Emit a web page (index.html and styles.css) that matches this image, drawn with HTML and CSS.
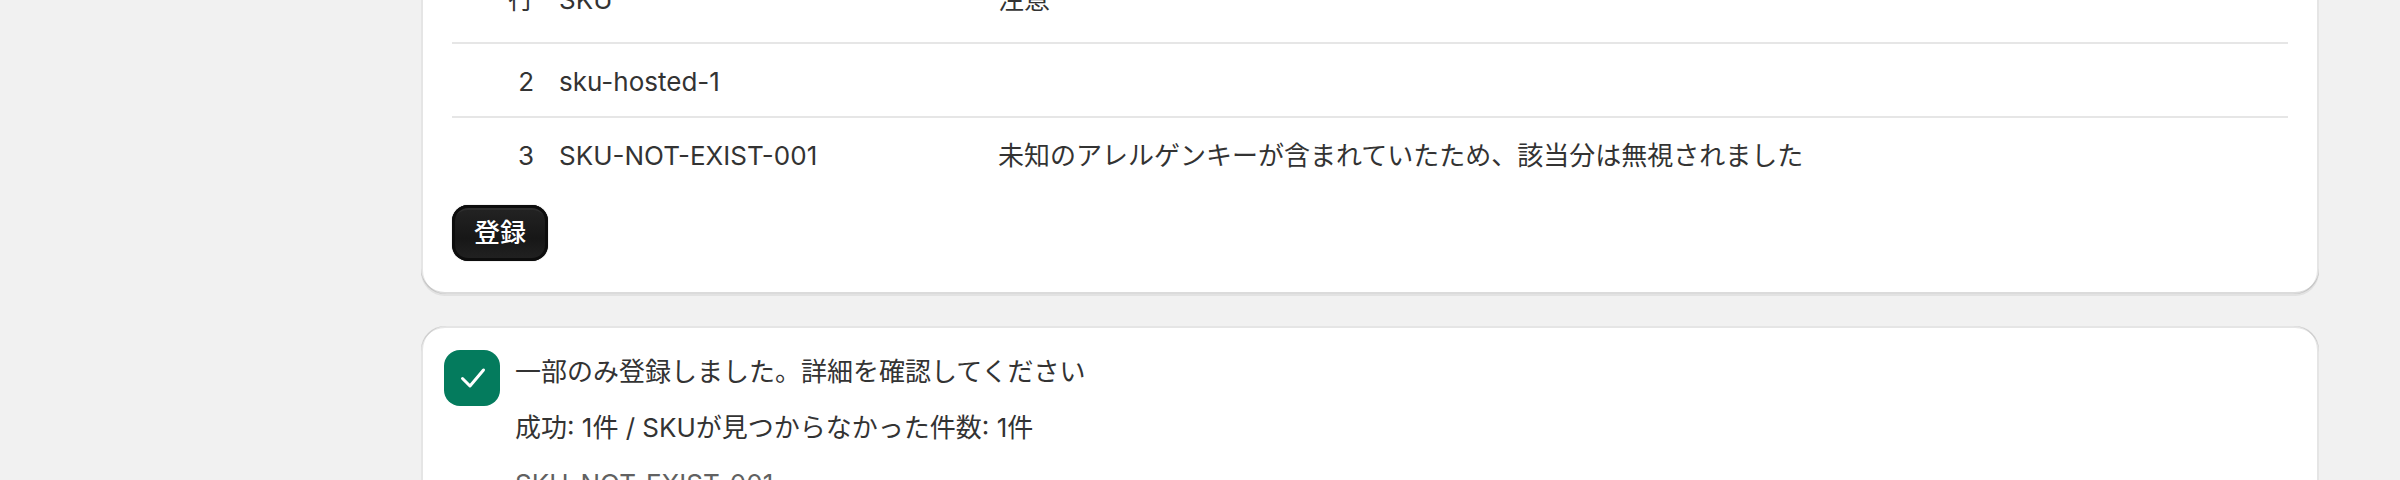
FILE: index.html
```html
<!DOCTYPE html>
<html lang="ja">
<head>
<meta charset="utf-8">
<title>一括登録</title>
<link rel="stylesheet" href="styles.css">
</head>
<body>
<main class="page">
  <section class="card card-table">
    <table class="table">
      <thead>
        <tr><th class="num">行</th><th class="sku">SKU</th><th>注意</th></tr>
      </thead>
      <tbody>
        <tr><td class="num">2</td><td class="sku">sku-hosted-1</td><td></td></tr>
        <tr><td class="num">3</td><td class="sku">SKU-NOT-EXIST-001</td><td>未知のアレルゲンキーが含まれていたため、該当分は無視されました</td></tr>
      </tbody>
    </table>
    <button class="btn" type="button">登録</button>
  </section>
  <section class="card card-result">
    <div class="icon">
      <svg viewBox="0 0 56 56" width="56" height="56" aria-hidden="true"><path d="M18.5 28.5l7.5 7.5L39.5 20" fill="none" stroke="#fff" stroke-width="3" stroke-linecap="round" stroke-linejoin="round"/></svg>
    </div>
    <div class="result">
      <p>一部のみ登録しました。詳細を確認してください</p>
      <p>成功: 1件 / SKUが見つからなかった件数: 1件</p>
      <p class="muted">SKU-NOT-EXIST-001</p>
    </div>
  </section>
</main>
</body>
</html>
```
FILE: styles.css
```css
html, body {
  margin: 0;
  height: 480px;
  overflow: hidden;
  background: #f1f1f1;
}
body {
  font-family: Inter, "Noto Sans CJK JP", sans-serif;
  font-size: 26px;
  font-weight: 420;
  line-height: 40px;
  color: #333;
}
.page {
  margin: -80px 81px 0 421px;
  display: flex;
  flex-direction: column;
  gap: 32px;
}
.card {
  background: #fff;
  border-radius: 24px;
  box-shadow:
    inset 2px 0 0 rgba(0, 0, 0, .1),
    inset -2px 0 0 rgba(0, 0, 0, .1),
    inset 0 -2px 0 rgba(0, 0, 0, .14),
    inset 0 2px 0 rgba(204, 204, 204, .5),
    0 2px 0 rgba(26, 26, 26, .07);
}
.card-table {
  padding: 49px 31px 33px;
}
.table {
  width: 100%;
  border-collapse: collapse;
  table-layout: fixed;
}
.table th, .table td {
  height: 74px;
  padding: 3px 0 0;
  text-align: left;
  font-weight: 420;
  border-bottom: 2px solid #e6e6e6;
  box-sizing: border-box;
}
.table th {
  padding: 0 0 12px;
}
.table tbody tr:last-child td {
  border-bottom: 0;
}
.table .num {
  width: 82px;
  text-align: right;
}
.table .sku {
  width: 464px;
  padding-left: 25px;
}
.btn {
  display: block;
  width: 96px;
  height: 56px;
  margin-top: 14px;
  padding: 0;
  border: 0;
  border-radius: 16px;
  font: 500 26px/40px Inter, "Noto Sans CJK JP", sans-serif;
  color: #fff;
  background: linear-gradient(#242424, #171717 60%, #222);
  box-shadow:
    inset 0 0 0 3px #0d0d0d,
    inset 0 5px 0 #2e2e2e,
    0 0 0 1px rgba(0, 0, 0, .05);
}
.card-result {
  display: flex;
  gap: 15px;
  padding: 24px 32px 32px 23px;
}
.icon {
  flex: none;
  width: 56px;
  height: 56px;
  border-radius: 16px;
  background: #047b5d;
}
.icon svg {
  display: block;
}
.result p {
  margin: 2px 0 16px;
}
.result p.muted {
  color: #616161;
}
```
